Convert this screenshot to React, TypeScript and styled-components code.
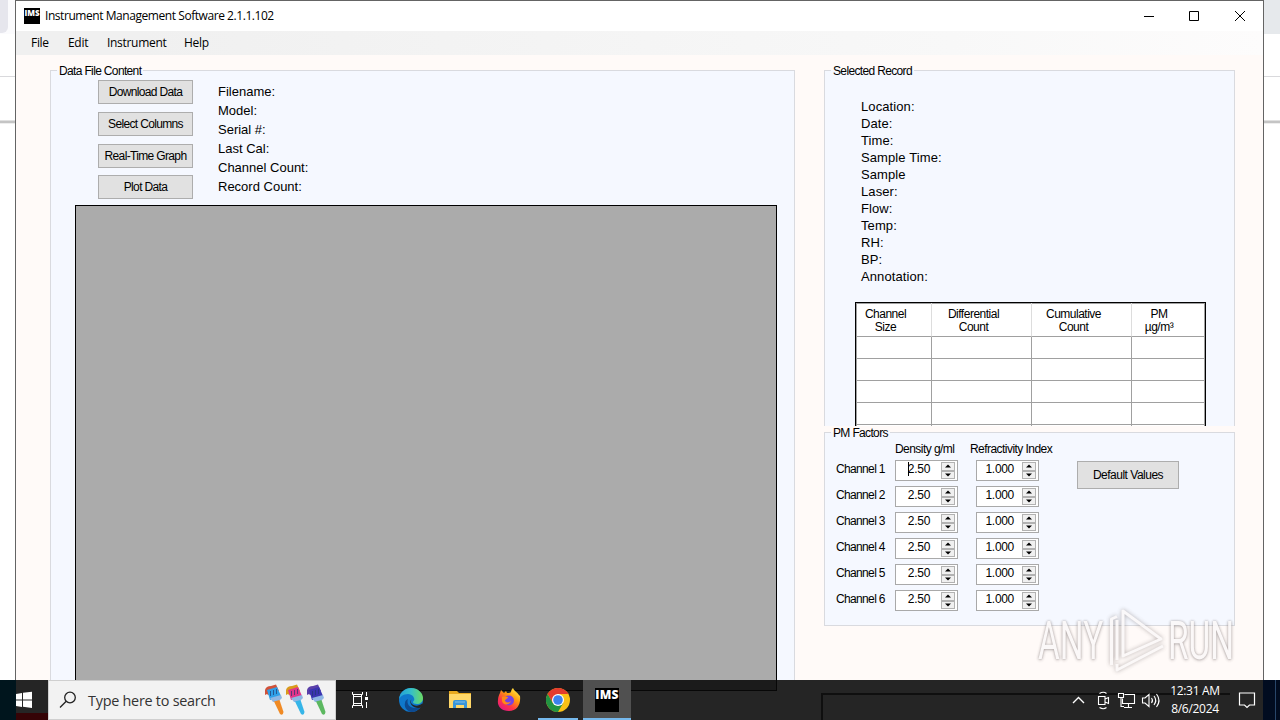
import * as React from "react";
import styled, { createGlobalStyle, css } from "styled-components";

const GlobalStyle = createGlobalStyle`
  * {
    box-sizing: border-box;
  }

  body {
    margin: 0;
    overflow: hidden;
    background: #fff;
  }
`;

const system = css`
  font-family: "Open Sans", "Noto Sans", sans-serif;
  font-size: 12px;
  letter-spacing: -0.44px;
`;

const classic = css`
  font-family: "Liberation Sans", Arial, sans-serif;
  font-size: 12px;
  letter-spacing: -0.65px;
`;

const Screen = styled.div`
  position: relative;
  width: 1280px;
  height: 720px;
  overflow: hidden;
  color: #000;
  white-space: nowrap;
`;

const Desktop = styled.div`
  display: flex;
  height: 680px;
`;

/* slices of the browser that sits behind the window */
const Behind = styled.div<{ side: "left" | "right" }>`
  width: ${p => (p.side === "left" ? 15 : 16)}px;
  height: 680px;
  background: linear-gradient(
    ${p => (p.side === "left" ? "#fbfbfd" : "#e6e9ec")} 0 34px,
    #fff 34px 76px,
    #d9d9dc 76px 77px,
    #fff 77px 120px,
    #e0e0e0 120px 121px,
    #c4c4c4 121px 123px,
    #eee 123px 124px,
    #fff 124px
  );
`;

const Tab = styled.div`
  width: 8px;
  height: 33px;
  background: #e6e6ed;
  border-radius: 0 0 6px 0;
`;

const Window = styled.div`
  display: flex;
  flex-direction: column;
  width: 1249px;
  height: 680px;
  border: 1px solid #646464;
  border-bottom: 0;
  background: #fffaf8;
`;

const TitleBar = styled.div`
  display: flex;
  align-items: center;
  height: 30px;
  padding: 0 0 1px 8px;
  background: #fff;
  ${system}
`;

const ImsIcon = styled.div<{ size: number }>`
  width: ${p => p.size}px;
  height: ${p => p.size}px;
  background: #000;
  color: #fff;
  text-align: center;
  font-family: "Open Sans", sans-serif;
  font-weight: 800;
  font-size: ${p => (p.size > 20 ? 12 : 8)}px;
  line-height: ${p => (p.size > 20 ? 14 : 9)}px;
  letter-spacing: ${p => (p.size > 20 ? 0.3 : 0)}px;
`;

const Title = styled.span`
  flex: 1;
  margin-left: 5px;
`;

const Caption = styled.div<{ shift?: number }>`
  display: flex;
  align-items: center;
  justify-content: center;
  width: 45.5px;
  height: 30px;
  padding-right: ${p => p.shift || 0}px;
`;

const MenuBar = styled.div`
  display: flex;
  align-items: center;
  height: 25px;
  padding: 0 0 1px 15px;
  background: linear-gradient(90deg, #f0f0f0 10%, #f8f8f8 75%, #fdfcfc);
  ${system}
  letter-spacing: -0.3px;
`;

const MenuItem = styled.span<{ width: number }>`
  width: ${p => p.width}px;
`;

const Content = styled.div`
  display: flex;
  align-items: flex-start;
  gap: 29px;
  padding: 9px 0 0 34px;
`;

const Column = styled.div`
  display: flex;
  flex-direction: column;
  width: 411px;
`;

const Group = styled.fieldset<{ width: number; height: number; open?: boolean }>`
  width: ${p => p.width}px;
  height: ${p => p.height}px;
  min-width: 0;
  margin: 0;
  padding: 0;
  border: 1px solid #d9dadf;
  ${p => p.open && "border-bottom: 0;"}
  background: #f5f8ff;
  overflow: hidden;
  ${classic}
`;

const Legend = styled.legend`
  height: 13px;
  margin-left: 6px;
  padding: 0 2px;
  line-height: 14px;
`;

const TopRow = styled.div`
  display: flex;
  height: 128px;
  padding: 3px 0 0 47px;
`;

const Buttons = styled.div`
  display: flex;
  flex-direction: column;
  gap: 8px;
  width: 95px;
`;

const Button = styled.button<{ width?: number; height?: number }>`
  flex: none;
  width: ${p => p.width || 95}px;
  height: ${p => p.height || 24}px;
  padding: 0;
  border: 1px solid #adadad;
  background: #e1e1e1;
  color: #000;
  ${classic}

  ${Buttons} &:last-child {
    margin-top: -1px;
  }
`;

const DefaultsButton = styled(Button)`
  margin: 22px 0 0 19px;
  letter-spacing: -0.5px;
`;

const Labels = styled.div<{ step: number }>`
  font-size: 13px;
  letter-spacing: 0.1px;
  line-height: ${p => p.step}px;
`;

const FileLabels = styled(Labels)`
  margin: 2px 0 0 25px;
  letter-spacing: 0;
`;

const RecordLabels = styled(Labels)`
  margin: 21px 0 0 36px;
`;

const DataGrid = styled.div`
  width: 702px;
  height: 490px;
  margin-left: 24px;
  border: 1px solid #000;
  background: #ababab;
`;

const ChannelTable = styled.table`
  width: 351px;
  margin: 17px 0 0 30px;
  border: 1px solid #000;
  border-collapse: separate;
  border-spacing: 0;
  table-layout: fixed;
  background: #fff;
  box-shadow: inset 0 0 0 1px #a0a0a0;
  letter-spacing: -0.5px;
`;

const Cell = styled.td<{ $head?: boolean }>`
  height: ${p => (p.$head ? 34 : 22)}px;
  padding: ${p => (p.$head ? "5px 16px 0 0" : 0)};
  border-right: 1px solid ${p => (p.$head ? "#ddd" : "#a0a0a0")};
  border-bottom: 1px solid #a0a0a0;
  line-height: 13px;
  text-align: center;
  vertical-align: top;

  &:last-child {
    padding-right: ${p => (p.$head ? 19 : 0)}px;
    border-right: 0;
  }
`;

const FactorArea = styled.div`
  display: flex;
  align-items: flex-start;
`;

const FactorHeads = styled.div`
  display: flex;
  height: 21px;
  margin-left: 70px;
  line-height: 21px;
`;

const FactorHead = styled.span<{ width: number }>`
  width: ${p => p.width}px;
  letter-spacing: -0.55px;
`;

const FactorGrid = styled.div`
  display: grid;
  grid-template-columns: 59px 81px 82px;
  grid-auto-rows: 26px;
  width: 222px;
  margin-left: 11px;
`;

const ChannelName = styled.span`
  line-height: 19px;
`;

const SpinBox = styled.div`
  display: flex;
  width: 63px;
  height: 21px;
  padding: 1px;
  border: 1px solid #a9a9a9;
  background: #fff;
`;

const SpinValue = styled.span<{ inset: number }>`
  flex: 1;
  padding-right: ${p => p.inset}px;
  line-height: 15px;
  text-align: right;
  letter-spacing: -0.3px;
`;

const Caret = styled.i`
  display: inline-block;
  width: 1px;
  height: 14px;
  margin-right: -1px;
  background: #000;
  vertical-align: top;
`;

const SpinButtons = styled.div`
  display: flex;
  flex-direction: column;
  width: 15px;
  padding-right: 1px;
`;

const SpinButton = styled.div`
  display: flex;
  align-items: center;
  justify-content: center;
  flex: 1;
  min-height: 0;
  border: 1px solid #b2b2b2;
  background: #f0f0f0;
`;

const Watermark = styled.div`
  position: absolute;
  left: 1038px;
  top: 606px;
  display: flex;
  align-items: center;
  width: 200px;
  height: 70px;
  opacity: 0.85;
`;

const WatermarkWord = styled.span<{ width: number }>`
  flex: none;
  width: ${p => p.width}px;
  color: #fbf8f8;
  font-family: Roboto, sans-serif;
  font-size: 53px;
  line-height: 74px;
  transform: scaleX(0.63);
  transform-origin: 0 50%;
  text-shadow: 0 0 3px rgba(110, 100, 100, 0.6), 0 1px 4px rgba(110, 100, 100, 0.45);
`;

const WatermarkLogo = styled.svg`
  filter: drop-shadow(0 0 2px rgba(110, 100, 100, 0.6));
`;

const Taskbar = styled.div`
  position: relative;
  display: flex;
  height: 40px;
  background: linear-gradient(
    90deg,
    #00151d 0 16px,
    #252525 16px 1263px,
    #010c20 1263px 1275px,
    #28466a 1275px 1276px,
    #010c20 1276px
  );
  color: #fff;
`;

const StartButton = styled.div`
  width: 32px;
  height: 40px;
  margin-left: 16px;
  background: linear-gradient(#252525 33px, #350306 33px);
`;

const Search = styled.div`
  display: flex;
  align-items: center;
  width: 288px;
  height: 40px;
  padding: 0 8px 0 10px;
  border: 1px solid #cfcfcf;
  background: #f2f2f2;
  color: #333;
  font-family: "Open Sans", "Noto Sans", sans-serif;
  font-size: 14.4px;
  letter-spacing: -0.25px;
`;

const SearchText = styled.span`
  flex: 1;
  margin-left: 11px;
`;

const AppStrip = styled.div`
  display: flex;
  width: 486px;
`;

const TaskButton = styled.div<{ state?: "running" | "active" }>`
  display: flex;
  align-items: center;
  justify-content: center;
  width: 48px;
  height: 40px;
  margin-right: 1px;
  background: ${p => (p.state === "active" ? "#505050" : "transparent")};
  border-bottom: 2px solid ${p => (p.state ? "#76b9ed" : "transparent")};
  padding-top: 2px;

  &:first-child {
    margin-right: 3px;
  }

  &:nth-child(5) {
    width: 40px;
    margin: 0 5px 0 4px;
  }
`;

/* edges of the window showing through the translucent bar */
const GridEdge = styled.div`
  position: absolute;
  left: 336px;
  top: 0;
  width: 441px;
  height: 11px;
  border: 1px solid #070707;
  border-width: 0 1px 1px 0;
  background: #1b1b1b;
`;

const PanelEdge = styled.div`
  position: absolute;
  left: 821px;
  top: 13px;
  width: 409px;
  height: 30px;
  border: 2px solid #0f0f0f;
  border-right: 0;
`;

const Layer = styled.div`
  position: relative;
  display: flex;
  flex: 1;
`;

const Tray = styled.div`
  display: flex;
  align-items: center;
  margin-left: auto;
`;

const Clock = styled.div`
  width: 72px;
  margin-left: -4px;
  text-align: center;
  font-family: "Open Sans", "Noto Sans", sans-serif;
  font-size: 12px;
  line-height: 18px;
  letter-spacing: -0.3px;
`;

const fileLabels = [
  "Filename:",
  "Model:",
  "Serial #:",
  "Last Cal:",
  "Channel Count:",
  "Record Count:",
];

const recordLabels = [
  "Location:",
  "Date:",
  "Time:",
  "Sample Time:",
  "Sample",
  "Laser:",
  "Flow:",
  "Temp:",
  "RH:",
  "BP:",
  "Annotation:",
];

const tableHeads = [
  ["Channel", "Size", 76],
  ["Differential", "Count", 100],
  ["Cumulative", "Count", 100],
  ["PM", "µg/m³", 73],
] as const;

const menus = [
  ["File", 37],
  ["Edit", 39],
  ["Instrument", 77],
  ["Help", 40],
] as const;

const Spinner: React.FC<{ value: string; inset: number; focused?: boolean }> = ({
  value,
  inset,
  focused,
}) => (
  <SpinBox>
    <SpinValue inset={inset}>
      {focused && <Caret />}
      {value}
    </SpinValue>
    <SpinButtons>
      <SpinButton>
        <svg width="6" height="4">
          <path d="M0 3.500 3 0.500 6 3.500z" />
        </svg>
      </SpinButton>
      <SpinButton>
        <svg width="6" height="4">
          <path d="M0 .5 3 3.500 6 .5z" />
        </svg>
      </SpinButton>
    </SpinButtons>
  </SpinBox>
);

const Brush: React.FC<{ top: string; bristle: string; handle: string }> = ({
  top,
  bristle,
  handle,
}) => (
  <svg width="21" height="34" viewBox="0 0 21 34">
    <path d="M1 7 Q2 3 7 3 L12 1.500 15 8 4 12 3 11 1 12z" fill={top} />
    <path d="M3 7 13 4 17 13 6 17z" fill={bristle} />
    <path d="M6.500 8v5M9.500 7v5M12.500 6v5" stroke="#223a70" strokeWidth="0.7" />
    <path d="M6 15 17 12 18 15 14 19 9 19z" fill="#8fb6e4" />
    <path d="M10 18.500 15.500 17 19.500 29 Q19 33 16 31z" fill={handle} />
  </svg>
);

const EdgeIcon = () => (
  <svg width="24" height="24" viewBox="0 0 24 24">
    <defs>
      <linearGradient id="edgeTop" x1="0" x2="1">
        <stop offset="0" stopColor="#229fd8" />
        <stop offset="0.5" stopColor="#35bfc9" />
        <stop offset="1" stopColor="#6cdb62" />
      </linearGradient>
    </defs>
    <circle cx="12" cy="12" r="12" fill="#0f78cc" />
    <path
      d="M0 11C1 4 6 0 12 0c7 0 12 5 12 10 0 4-3 6-6 6-3 0-4-1-4-2s2-1 1-4C14 7 11 6 9 6 4 6 1 9 0 11z"
      fill="url(#edgeTop)"
    />
    <path
      d="M9 11c-2 5 2 9 7 9 3 0 5-1 6-2-2 4-6 6-10 6-5-1-7-6-6-9 0-2 1-3 3-4z"
      fill="#0d4a91"
    />
    <path
      d="M12.500 11.500c-1 1.500-1 4 2 5.500s6 .5 8.500-1.500l1.500 1-1.500 2.500c-3 2-8 1-10.500-2-1.500-2-1.500-4.500 0-5.500z"
      fill="#252525"
    />
  </svg>
);

const FolderIcon = () => (
  <svg width="22" height="20" viewBox="0 0 22 20">
    <path d="M0 1h8l2 2h12v15H0z" fill="#e8a91f" />
    <path d="M0 4h22v14H0z" fill="#ffd768" />
    <path d="M4 18v-6q0-2 2-2h10q2 0 2 2v6h-3v-3H7v3z" fill="#3a95d8" />
    <path d="M6 12h10" stroke="#80bfe8" />
  </svg>
);

const FirefoxIcon = () => (
  <svg width="24" height="24" viewBox="0 0 24 24">
    <defs>
      <linearGradient id="fox" x1="0.9" y1="0" x2="0.2" y2="1">
        <stop offset="0" stopColor="#fff44f" />
        <stop offset="0.4" stopColor="#ff980e" />
        <stop offset="0.7" stopColor="#ff3647" />
        <stop offset="1" stopColor="#e31587" />
      </linearGradient>
    </defs>
    <path
      d="M3 5l1-3 3 3 2-2 1 2c2 0 3 0 4-1 0-2 1-3 2-4 1 3 4 4 6 7l1 1c1 8-3 15-11 15S0 18 1 12c0-3 1-5 2-7z"
      fill="url(#fox)"
    />
    <circle cx="12" cy="12.5" r="5" fill="#7542e5" />
    <path
      d="M5 9c2-1 4 0 6 0 0 2-3 2-3 4 2 2 4 2 6 0-1 4-8 5-9 0z"
      fill="#ff8a16"
    />
  </svg>
);

const ChromeIcon = () => (
  <svg width="24" height="24" viewBox="0 0 24 24">
    <circle cx="12" cy="12" r="12" fill="#fbc116" />
    <path d="M1.6 6A12 12 0 0 1 22.4 6H12L6.8 15z" fill="#e33b2e" />
    <path d="M1.6 6A12 12 0 0 0 12 24l5.2-9H6.8z" fill="#229342" />
    <circle cx="12" cy="12" r="6" fill="#fff" />
    <circle cx="12" cy="12" r="4.8" fill="#3b82ee" />
  </svg>
);

const TaskViewIcon = () => (
  <svg width="17" height="16" viewBox="0 0 17 16" fill="none" stroke="#fff">
    <path d="M.5 0v2.500h10V0M.5 16v-2.500h10V16M1.500 2.500v11M9.500 2.500v11M1.500 4.500h8M1.500 11.500h8M14.500 0v4M14.500 10v6" />
    <path d="M13 5h3v3h-3z" fill="#fff" stroke="none" />
  </svg>
);

const TrayIcons = () => (
  <svg
    width="92"
    height="24"
    viewBox="0 0 92 24"
    fill="none"
    stroke="#fff"
    strokeWidth="1.1"
  >
    <path d="M2 15 7.500 9.500 13 15" strokeWidth="1.400" />
    <path d="M27.500 8.500H34v8h-6.500zM34 11l3.500-1.500v6L34 14M28.500 5.500q4-2.500 7 0M28.500 19.500q4 2.500 7 0" />
    <path d="M53.500 6.500h10v9h-12v-5M47.500 5.500h5v4h-5zM50 9.500v9h3M57.500 15.500v3.500M53 19.500h8" />
    <path d="M71.500 10h2.500l4-3.500v12L74 15h-2.500zM80.500 10q2 2.500 0 5M83 8q3.500 4.500 0 9M85.500 6q5 6.500 0 13" />
  </svg>
);

const App: React.FC = () => {
  return (
    <Screen>
      <GlobalStyle />
      <Desktop>
        <Behind side="left">
          <Tab />
        </Behind>
        <Window>
          <TitleBar>
            <ImsIcon size={16}>IMS</ImsIcon>
            <Title>Instrument Management Software 2.1.1.102</Title>
            <Caption>
              <svg width="10" height="10" stroke="#000">
                <path d="M0 5.500h10" />
              </svg>
            </Caption>
            <Caption shift={1.5}>
              <svg width="10" height="10" fill="none" stroke="#000">
                <path d="M.5.5h9v9h-9z" />
              </svg>
            </Caption>
            <Caption>
              <svg width="10" height="10" fill="none" stroke="#000">
                <path d="M0 0l10 10M10 0L0 10" />
              </svg>
            </Caption>
          </TitleBar>
          <MenuBar>
            {menus.map(([name, width]) => (
              <MenuItem key={name} width={width}>
                {name}
              </MenuItem>
            ))}
          </MenuBar>
          <Content>
            <Group width={745} height={616} open>
              <Legend>Data File Content</Legend>
              <TopRow>
                <Buttons>
                  <Button>Download Data</Button>
                  <Button>Select Columns</Button>
                  <Button>Real-Time Graph</Button>
                  <Button>Plot Data</Button>
                </Buttons>
                <FileLabels step={19}>
                  {fileLabels.map(label => (
                    <div key={label}>{label}</div>
                  ))}
                </FileLabels>
              </TopRow>
              <DataGrid />
            </Group>
            <Column>
              <Group width={411} height={362} open>
                <Legend>Selected Record</Legend>
                <RecordLabels step={17}>
                  {recordLabels.map(label => (
                    <div key={label}>{label}</div>
                  ))}
                </RecordLabels>
                <ChannelTable>
                  <colgroup>
                    {tableHeads.map(([top, , width]) => (
                      <col key={top} width={width} />
                    ))}
                  </colgroup>
                  <tbody>
                    <tr>
                      {tableHeads.map(([top, bottom]) => (
                        <Cell $head key={top}>
                          {top}
                          <br />
                          {bottom}
                        </Cell>
                      ))}
                    </tr>
                    {[1, 2, 3, 4, 5].map(row => (
                      <tr key={row}>
                        {tableHeads.map(([top]) => (
                          <Cell key={top} />
                        ))}
                      </tr>
                    ))}
                  </tbody>
                </ChannelTable>
              </Group>
              <Group width={411} height={200}>
                <Legend>PM Factors</Legend>
                <FactorArea>
                  <div>
                    <FactorHeads>
                      <FactorHead width={75}>Density g/ml</FactorHead>
                      <FactorHead width={88}>Refractivity Index</FactorHead>
                    </FactorHeads>
                    <FactorGrid>
                      {[1, 2, 3, 4, 5, 6].map(n => (
                        <React.Fragment key={n}>
                          <ChannelName>Channel {n}</ChannelName>
                          <Spinner value="2.50" inset={11} focused={n === 1} />
                          <Spinner value="1.000" inset={8} />
                        </React.Fragment>
                      ))}
                    </FactorGrid>
                  </div>
                  <DefaultsButton width={102} height={28}>
                    Default Values
                  </DefaultsButton>
                </FactorArea>
              </Group>
            </Column>
          </Content>
        </Window>
        <Behind side="right" />
      </Desktop>
      <Taskbar>
        <GridEdge />
        <PanelEdge />
        <Layer>
          <StartButton>
            <svg width="17" height="40" fill="#fff">
              <path d="M0 14l6-1v6.500H0zM7 12.800l9-1v7.700H7zM0 20.500h6V27l-6-1zM7 20.500h9V28l-9-1.200z" />
            </svg>
          </StartButton>
          <Search>
            <svg
              width="18"
              height="18"
              fill="none"
              stroke="#222"
              strokeWidth="1.300"
            >
              <circle cx="11" cy="6.500" r="5.300" />
              <path d="M7.200 10.300 1 16.500" />
            </svg>
            <SearchText>Type here to search</SearchText>
            <Brush top="#d0523a" bristle="#2f9fe8" handle="#f08a24" />
            <Brush top="#d99a1c" bristle="#e0348b" handle="#35b5e8" />
            <Brush top="#5a3fa8" bristle="#3a34b0" handle="#5cb860" />
          </Search>
          <AppStrip>
            <TaskButton>
              <TaskViewIcon />
            </TaskButton>
            <TaskButton>
              <EdgeIcon />
            </TaskButton>
            <TaskButton>
              <FolderIcon />
            </TaskButton>
            <TaskButton>
              <FirefoxIcon />
            </TaskButton>
            <TaskButton state="running">
              <ChromeIcon />
            </TaskButton>
            <TaskButton state="active">
              <ImsIcon size={24}>IMS</ImsIcon>
            </TaskButton>
          </AppStrip>
          <Tray>
            <TrayIcons />
            <Clock>
              12:31 AM
              <br />
              8/6/2024
            </Clock>
            <svg
              width="49"
              height="20"
              fill="none"
              stroke="#fff"
              strokeWidth="1.200"
            >
              <path d="M8.500 3h15v12h-5l-2.500 2.500L13.500 15h-5z" />
            </svg>
          </Tray>
        </Layer>
      </Taskbar>
      <Watermark>
        <WatermarkWord width={69}>ANY</WatermarkWord>
        <WatermarkLogo width="61" height="70" viewBox="0 0 61 70" fill="none">
          <path
            d="M16 5v45l38-17zM10 10.500 4.500 13v46M10 14v40M10 58v6l46-24"
            stroke="#fbf8f8"
            strokeWidth="3"
            strokeLinejoin="round"
          />
        </WatermarkLogo>
        <WatermarkWord width={68}>RUN</WatermarkWord>
      </Watermark>
    </Screen>
  );
};

export default App;
